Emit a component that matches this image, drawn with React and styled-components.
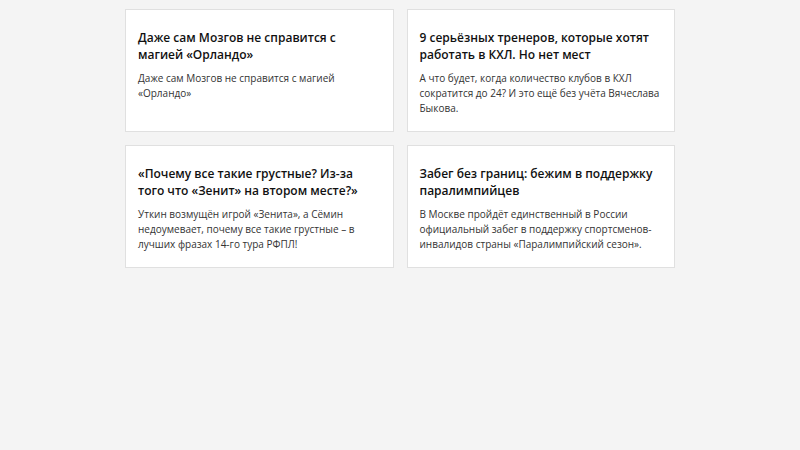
import React from 'react';
import styled, { createGlobalStyle } from 'styled-components';

const GlobalStyle = createGlobalStyle`
    body {
        margin: 0;
        background: #f4f4f4;
        font-family: "Open Sans", "Liberation Sans", sans-serif;
    }
`;

const news = [
    {
        title: 'Даже сам Мозгов не справится с магией «Орландо»',
        text: 'Даже сам Мозгов не справится с магией «Орландо»',
    },
    {
        title: '9 серьёзных тренеров, которые хотят работать в КХЛ. Но нет мест',
        text: 'А что будет, когда количество клубов в КХЛ сократится до 24? И это ещё без учёта Вячеслава Быкова.',
    },
    {
        title: '«Почему все такие грустные? Из-за того что «Зенит» на втором месте?»',
        text: 'Уткин возмущён игрой «Зенита», а Сёмин недоумевает, почему все такие грустные – в лучших фразах 14-го тура РФПЛ!',
    },
    {
        title: 'Забег без границ: бежим в поддержку паралимпийцев',
        text: 'В Москве пройдёт единственный в России официальный забег в поддержку спортсменов-инвалидов страны «Паралимпийский сезон».',
    },
];

const App = () => {
    return (
        <>
            <GlobalStyle />
            <Grid>
                {news.map((item) => (
                    <Card key={item.title}>
                        <Title>{item.title}</Title>
                        <Text>{item.text}</Text>
                    </Card>
                ))}
            </Grid>
        </>
    );
};

const Grid = styled.div`
    width: 550px;
    margin: 0 auto;
    padding-top: 9px;
    display: grid;
    grid-template-columns: 1fr 1fr;
    gap: 13px;
`;

const Card = styled.article`
    box-sizing: border-box;
    height: 123px;
    background: #fff;
    border: 1px solid #e0e0e0;
    padding: 19px 14px 0 12px;
`;

const Title = styled.h3`
    margin: 0;
    font-size: 12px;
    font-weight: 600;
    line-height: 17px;
    color: #111;
`;

const Text = styled.p`
    margin: 8px 0 0;
    font-size: 10px;
    line-height: 15px;
    color: #333;
`;

export default App;
